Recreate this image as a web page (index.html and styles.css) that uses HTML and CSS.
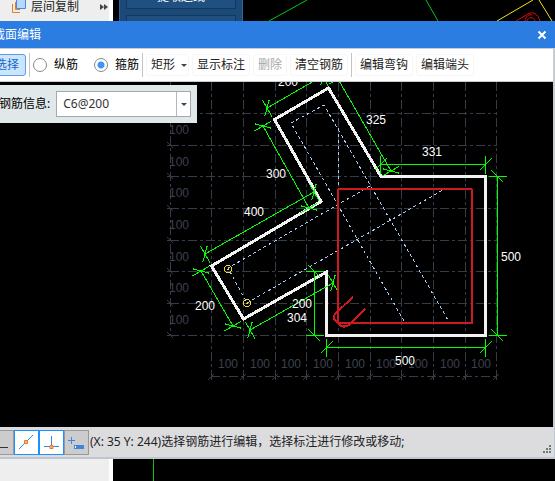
FILE: index.html
```html
<!DOCTYPE html>
<html lang="zh-CN">
<head>
<meta charset="utf-8">
<title>截面编辑</title>
<link rel="stylesheet" href="styles.css">
</head>
<body>
<header class="host-top">
  <div class="ribbon">
    <button class="ribbon-item" type="button">
      <svg class="copy-icon" width="16" height="16" viewBox="0 0 16 16" aria-hidden="true">
        <path d="M0.500 4V12.500H8M3.500 2V9.500H8" fill="none" stroke="#e87c1e"/>
        <path d="M4.500 -3.500H13.500V8.500H4.500Z" fill="#b9d7fb" stroke="#3f8be8"/>
      </svg>
      <span>层间复制</span>
    </button>
    <svg class="more-icon" width="8" height="8" viewBox="0 0 8 8" aria-hidden="true"><path d="M0 1L4 4L0 7ZM4 1L8 4L4 7Z" fill="#444"/></svg>
  </div>
  <div class="side-panel">
    <button class="side-button side-button-first" type="button">提取边线</button>
    <div class="side-button side-button-next"></div>
  </div>
  <svg class="host-view" width="312" height="21" viewBox="243 0 312 21" fill="none" aria-hidden="true">
    <path d="M269 21L307 0M426 0L438 21" stroke="#00c814"/>
    <path d="M497 21L533 0M539 0L552 21" stroke="#f0e614"/>
    <path d="M516 21L528 14C533 11 538 14 540 21M525 21C526 16 529 14 532 15M527 21C528 17 534 16 535 21" stroke="#e60a0a"/>
  </svg>
</header>

<main class="dialog">
  <div class="titlebar">
    <h1 class="title">截面编辑</h1>
    <button class="close" type="button" aria-label="关闭">
      <svg width="10" height="10" viewBox="0 0 10 10"><path d="M1.500 1.500L8.500 8.500M8.500 1.500L1.500 8.500" stroke="#fff" stroke-width="2"/></svg>
    </button>
  </div>

  <div class="toolbar">
    <button class="tool tool-active" type="button">选择</button>
    <span class="separator"></span>
    <label class="choice"><input type="radio" name="bar"><span>纵筋</span></label>
    <label class="choice choice-last"><input type="radio" name="bar" checked><span>箍筋</span></label>
    <span class="separator"></span>
    <button class="tool tool-menu" type="button">矩形<i class="caret"></i></button>
    <button class="tool" type="button">显示标注</button>
    <button class="tool" type="button" disabled>删除</button>
    <button class="tool" type="button">清空钢筋</button>
    <span class="separator"></span>
    <button class="tool" type="button">编辑弯钩</button>
    <button class="tool" type="button">编辑端头</button>
  </div>

  <section class="canvas">
    <svg class="drawing" viewBox="0 82 553 345" preserveAspectRatio="xMinYMin slice">
      <defs>
        <path id="mark" d="M0 -9V9M-6 6L6 -6"/>
        <path id="long-mark" d="M0 -9V10M-6 6L6 -6"/>
        <path id="grid-tick" d="M-3 3L3 -3M0 -3V3"/>
        <path id="side-tick" d="M-3 -3L3 3M-3 0H3"/>
      </defs>
      <g class="grid">
        <path d="M211.500 82V376M243.500 82V376M275.500 82V376M306.500 82V376M338.500 82V376M370.500 82V376M401.500 82V376M433.500 82V376M465.500 82V376M496.500 82V376"/>
        <path d="M170 113.500H497M170 145.500H497M170 176.500H497M170 208.500H497M170 240.500H497M170 271.500H497M170 303.500H497M170 335.500H497M211 376.500H497M170.500 82V336"/>
      </g>
      <g class="grid-ticks">
        <use href="#side-tick" x="170" y="145"/><use href="#side-tick" x="170" y="176"/><use href="#side-tick" x="170" y="208"/><use href="#side-tick" x="170" y="240"/><use href="#side-tick" x="170" y="271"/><use href="#side-tick" x="170" y="303"/><use href="#side-tick" x="170" y="335"/>
        <use href="#grid-tick" x="211" y="377"/><use href="#grid-tick" x="243" y="377"/><use href="#grid-tick" x="275" y="377"/><use href="#grid-tick" x="306" y="377"/><use href="#grid-tick" x="338" y="377"/><use href="#grid-tick" x="370" y="377"/><use href="#grid-tick" x="401" y="377"/><use href="#grid-tick" x="433" y="377"/><use href="#grid-tick" x="465" y="377"/><use href="#grid-tick" x="496" y="377"/>
      </g>
      <g class="grid-labels">
        <text x="179" y="134">100</text><text x="179" y="166">100</text><text x="179" y="197">100</text><text x="179" y="229">100</text><text x="179" y="261">100</text><text x="179" y="292">100</text><text x="179" y="324">100</text>
        <text x="228" y="368">100</text><text x="260" y="368">100</text><text x="291" y="368">100</text><text x="323" y="368">100</text><text x="355" y="368">100</text><text x="386" y="368">100</text><text x="418" y="368">100</text><text x="450" y="368">100</text><text x="481" y="368">100</text>
      </g>
      <path class="outline" d="M274.500 119.500L328.500 88L381 176.500H485.500V335.500H326.500V272L243.500 319L211.500 266L321 201.500Z"/>
      <path class="rebar-axis" d="M404 321L291 123L324 105L449 322M370 186L228 268L247 303L443 190M338.500 128V189"/>
      <g class="dimensions">
        <path d="M267 108L321 77M338 79L391 171M263 126L309 208M205 254L314 192M201 271L233 326M250 330L333 283"/>
        <path d="M380.500 164.500H485.500M497.500 176.500V335.500M326.500 347.500H485.500M314.500 271.500V335.500"/>
        <use href="#long-mark" transform="translate(267 108) rotate(-30)"/>
        <use href="#long-mark" transform="translate(323 77) rotate(-30)"/>
        <use href="#long-mark" transform="translate(338 79) rotate(60)"/>
        <use href="#long-mark" transform="translate(391 171) rotate(60)"/>
        <use href="#long-mark" transform="translate(263 126) rotate(60)"/>
        <use href="#long-mark" transform="translate(309 208) rotate(60)"/>
        <use href="#long-mark" transform="translate(205 254) rotate(-30)"/>
        <use href="#long-mark" transform="translate(314 192) rotate(-30)"/>
        <use href="#long-mark" transform="translate(201 271) rotate(60)"/>
        <use href="#long-mark" transform="translate(233 326) rotate(60)"/>
        <use href="#long-mark" transform="translate(250 330) rotate(-30)"/>
        <use href="#long-mark" transform="translate(333 283) rotate(-30)"/>
        <use href="#mark" transform="translate(380.500 164.500)"/>
        <use href="#mark" transform="translate(485.500 164.500)"/>
        <use href="#mark" transform="translate(326.500 347.500)"/>
        <use href="#mark" transform="translate(485.500 347.500)"/>
        <use href="#mark" transform="translate(497.500 176.500) rotate(90)"/>
        <use href="#mark" transform="translate(497.500 335.500) rotate(90)"/>
        <use href="#mark" transform="translate(314.500 271.500) rotate(90)"/>
        <use href="#mark" transform="translate(314.500 335.500) rotate(90)"/>
      </g>
      <path class="stirrup" d="M340 189H470Q472 189 472 191V323H340Q338 323 338 321V191Q338 189 340 189ZM353 297L335 314Q332 319 337 322M338 323Q342 329 349 325L365 309"/>
      <g class="nodes"><circle cx="228" cy="269" r="3.500"/><circle cx="247" cy="303" r="3.500"/><path d="M227 269H229M246 303H248"/></g>
      <g class="values">
        <text x="288" y="86">200</text><text x="376" y="124">325</text><text x="432" y="156">331</text>
        <text x="276" y="178">300</text><text x="254" y="216">400</text><text x="511" y="261">500</text>
        <text x="205" y="310">200</text><text x="302" y="308">200</text><text x="297" y="322">304</text><text x="405" y="365">500</text>
      </g>
    </svg>
    <div class="info-panel">
      <label for="rebar">钢筋信息:</label>
      <div class="combo">
        <input id="rebar" type="text" value="C6@200">
        <button type="button" aria-label="展开"><i class="caret"></i></button>
      </div>
    </div>
  </section>

  <footer class="statusbar">
    <div class="snaps">
      <button class="snap" type="button" aria-label="正交"><svg width="24" height="24" viewBox="0 0 24 24"><path d="M6 5V16.500H18" stroke="#333" fill="none"/></svg></button>
      <button class="snap snap-on" type="button" aria-label="中点"><svg width="24" height="24" viewBox="0 0 24 24"><path d="M4 18L18 4" stroke="#3d86d8"/><path d="M9.500 9.500H12.500V12.500H9.500Z" stroke="#f07820" fill="#f8b27c"/></svg></button>
      <button class="snap snap-on" type="button" aria-label="垂点"><svg width="24" height="24" viewBox="0 0 24 24"><path d="M4 15.500H19M11.500 5V15" stroke="#3d86d8"/><path d="M10 14.500H13V17.500H10Z" stroke="#f07820" fill="#f8b27c"/></svg></button>
      <button class="snap" type="button" aria-label="动态输入"><svg width="24" height="24" viewBox="0 0 24 24"><path d="M3 9.500H10M6.500 6V13" stroke="#3d86d8"/><path d="M9 14H19V18H9Z" fill="#3d86d8"/><path d="M10.500 15V17" stroke="#fff"/></svg></button>
    </div>
    <output class="message">(X: 35 Y: 244)选择钢筋进行编辑，选择标注进行修改或移动;</output>
    <svg class="grip" width="8" height="8" viewBox="0 0 8 8" aria-hidden="true"><path d="M6 0H8V2H6ZM3 3H5V5H3ZM6 3H8V5H6ZM0 6H2V8H0ZM3 6H5V8H3ZM6 6H8V8H6Z" fill="#74777c"/></svg>
  </footer>
</main>

<div class="host-bottom">
  <div class="ribbon"></div>
  <div class="axis"></div>
</div>
</body>
</html>
```
FILE: styles.css
```css
* {
  box-sizing: border-box;
}

body {
  margin: 0;
  min-height: 100vh;
  display: flex;
  flex-direction: column;
  overflow: hidden;
  background: #000;
  color: #222;
  font: 12px/16px "Noto Sans", "Noto Sans CJK SC", sans-serif;
}

button,
input {
  margin: 0;
  padding: 0;
  color: inherit;
  font: inherit;
}

button {
  flex: none;
  white-space: nowrap;
}

svg {
  flex: none;
  display: block;
}

.host-top {
  display: flex;
  height: 21px;
  overflow: hidden;
}

.ribbon {
  display: flex;
  flex: none;
  align-items: flex-start;
  justify-content: space-between;
  width: 113px;
  padding: 0 4px 0 12px;
  border-right: 4px solid #fff;
  background: #eee;
}

.ribbon-item {
  display: flex;
  gap: 3px;
  border: 0;
  background: none;
  line-height: 14px;
}

.more-icon {
  margin-top: 3px;
  margin-right: -3px;
}

.side-panel {
  flex: none;
  width: 124px;
  margin-left: 6px;
  padding: 0 6px;
  border: solid #2d649c;
  border-width: 0 1px;
  background: #1c4a78;
}

.side-button {
  display: block;
  width: 100%;
  height: 24px;
  border: 1px solid #123a60;
  background: #1f5080;
  color: #fff;
}

.side-button-first {
  margin-top: -15px;
}

.side-button-next {
  margin-top: 6px;
}

.dialog {
  border-bottom: 2px solid #bfc6d0;
}

.titlebar {
  display: flex;
  align-items: center;
  justify-content: space-between;
  height: 27px;
  padding-right: 8px;
  background: #2b7de1;
}

.title {
  margin: 0 0 0 -7px;
  color: #fff;
  font-size: 12px;
  font-weight: 400;
}

.close {
  border: 0;
  background: none;
}

.toolbar {
  display: flex;
  align-items: center;
  gap: 3px;
  height: 34px;
  border: solid #c8ccd0;
  border-width: 1px 2px 1px 0;
  background: #fff;
}

.tool {
  height: 22px;
  padding: 0 4px;
  border: 1px solid #f6f6f6;
  border-radius: 3px;
  background: #fff;
}

.tool:disabled {
  color: #a8a8a8;
}

.tool-active {
  margin-left: -12px;
  padding: 0 6px;
  border-color: #5a9fe8;
  background: #cce5ff;
  color: #1768c4;
}

.tool-menu {
  display: flex;
  align-items: center;
  gap: 6px;
  padding-right: 1px;
}

.separator {
  flex: none;
  width: 1px;
  height: 24px;
  background: #c4c4c4;
}

.choice {
  display: flex;
  flex: none;
  align-items: center;
  gap: 7px;
  width: 58px;
  color: #000;
}

.choice-last {
  width: 45px;
}

.choice input {
  appearance: none;
  flex: none;
  width: 14px;
  height: 14px;
  border: 1px solid #888;
  border-radius: 50%;
  background: #fff;
}

.choice span {
  white-space: nowrap;
}

.choice input:checked {
  background: radial-gradient(circle, #3f95f5 3px, #fff 4px);
}

.caret {
  display: block;
  border: solid transparent;
  border-width: 3px 3px 0;
  border-top-color: #444;
}

.canvas {
  position: relative;
  border-right: 2px solid #c8ccd0;
  background: #000;
}

.drawing {
  width: 100%;
  height: auto;
  fill: none;
  shape-rendering: crispEdges;
}

.grid {
  stroke: #363b48;
  stroke-dasharray: 9 3 3 3;
}

.grid-ticks {
  stroke: #363b48;
}

.grid-labels,
.values {
  font: 12px "Liberation Sans", sans-serif;
  text-anchor: middle;
}

.grid-labels {
  fill: #3c4250;
}

.values {
  fill: #fff;
}

.outline {
  stroke: #f2f2f2;
  stroke-width: 3;
}

.rebar-axis {
  stroke: #a9cdf5;
  stroke-dasharray: 3 3;
}

.dimensions {
  stroke: #0f0;
}

.stirrup {
  stroke: #d01820;
  stroke-width: 2;
}

.nodes {
  stroke: #f5dc28;
}

.info-panel {
  position: absolute;
  top: 3px;
  left: 0;
  display: flex;
  align-items: center;
  gap: 6px;
  height: 38px;
  padding-right: 6px;
  background: #e0e8e9;
  color: #000;
}

.info-panel label {
  margin-left: -1px;
}

.combo {
  display: flex;
  width: 135px;
  height: 26px;
  border: 1px solid #a5a9ad;
  background: #fff;
}

.combo input {
  flex: 1;
  min-width: 0;
  padding: 0 6px;
  border: 0;
  background: none;
  color: #333;
}

.combo button {
  display: grid;
  place-items: center;
  width: 14px;
  border: 0;
  border-left: 1px solid #b4b8bc;
  background: none;
}

.statusbar {
  display: flex;
  align-items: center;
  height: 30px;
  padding-right: 3px;
  border-right: 1px solid #bfc6d0;
  background: #dcdcdf;
}

.snaps {
  display: flex;
  flex: none;
  margin-left: -11px;
}

.snap {
  width: 25px;
  height: 25px;
  border: 1px solid #999;
  background: #ccccce;
}

.snap-on {
  border-color: #1e90ff;
  background: #fff;
}

.message {
  flex: 1;
  padding-left: 1px;
  white-space: nowrap;
}

.grip {
  align-self: flex-end;
  margin-bottom: 4px;
}

.host-bottom {
  display: flex;
  flex: 1;
  min-height: 22px;
}

.axis {
  width: 41px;
  border-right: 1px solid #00c814;
}
```
